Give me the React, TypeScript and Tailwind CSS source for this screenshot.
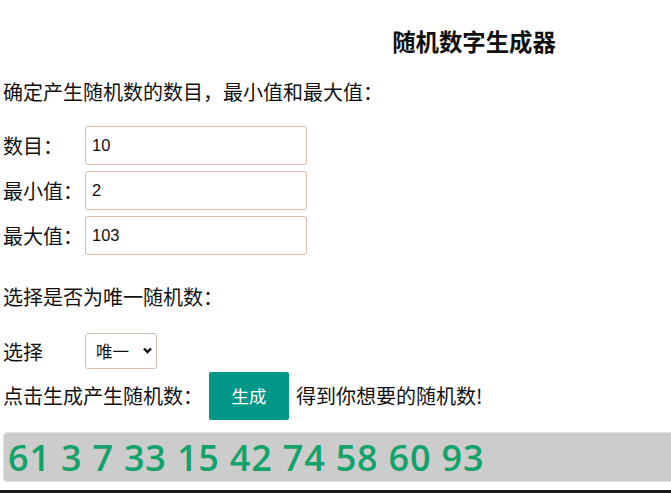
import React, { useState } from "react";

const cjk = "font-['Microsoft_YaHei','Noto_Sans_CJK_SC',sans-serif]";

const Field = ({ label, value }: { label: string; value: string }) => (
  <div className="flex items-center h-[39px]">
    <span className="w-[82px] text-[20px] leading-[28px] pt-[1px]">{label}</span>
    <input
      defaultValue={value}
      className="w-[222px] h-[39px] border border-[#d9bcae] rounded-[3px] pl-[6px] text-[16.5px] text-[#111] font-['Liberation_Sans',sans-serif] outline-none"
    />
  </div>
);

export default function App() {
  const [numbers] = useState([61, 3, 7, 33, 15, 42, 74, 58, 60, 93]);

  return (
    <div className={`w-[671px] h-[493px] overflow-hidden bg-white text-[#111] ${cjk}`}>
      <div className="w-[948px]">
        <h3 className="pt-[26px] text-center text-[23.4px] leading-[30px] font-bold">随机数字生成器</h3>

        <div className="pl-[3px]">
          <p className="mt-[22px] text-[20px] leading-[28px]">确定产生随机数的数目，最小值和最大值：</p>

          <div className="mt-[20px] flex flex-col gap-[6px]">
            <Field label="数目：" value="10" />
            <Field label="最小值：" value="2" />
            <Field label="最大值：" value="103" />
          </div>

          <p className="mt-[28px] text-[20px] leading-[28px]">选择是否为唯一随机数：</p>

          <div className="mt-[22px] flex items-center h-[36px]">
            <span className="w-[82px] text-[20px] leading-[28px] pt-[2px]">选择</span>
            <div className="relative">
              <select className="appearance-none w-[72px] h-[36px] border border-[#d9bcae] rounded-[3px] pl-[10px] text-[16.5px] bg-white outline-none">
                <option>唯一</option>
                <option>不唯一</option>
              </select>
              <svg
                className="absolute right-[5px] top-[14px] pointer-events-none"
                width="9"
                height="7"
                viewBox="0 0 9 7"
              >
                <path d="M1 1.5 L4.5 5 L8 1.5" fill="none" stroke="#111" strokeWidth="2.4" />
              </svg>
            </div>
          </div>

          <div className="mt-[3px] flex items-center h-[48px]">
            <span className="text-[20px] leading-[28px]">点击生成产生随机数：</span>
            <button className="ml-[6px] w-[80px] h-[48px] bg-[#009688] text-white text-[17.5px] rounded-[2px]">
              生成
            </button>
            <span className="ml-[7px] text-[20px] leading-[28px]">得到你想要的随机数!</span>
          </div>
        </div>

        <div className="mt-[12px] ml-[3px] h-[50px] bg-[#cccccc] border border-[#e2e2e2] rounded-[4px] flex items-center pl-[4px]">
          <span className="text-[36px] leading-[40px] font-semibold text-[#10a36a] font-['Open_Sans',sans-serif] tracking-[0.8px] pt-[2px]">
            {numbers.join(" ")}
          </span>
        </div>

        <div className="mt-[8px] h-[10px] bg-[#1a1a1a]" />
      </div>
    </div>
  );
}
